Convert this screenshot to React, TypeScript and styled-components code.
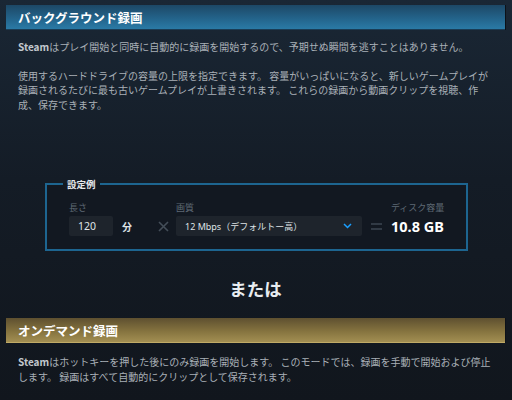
import styled, { createGlobalStyle } from 'styled-components'

const GlobalStyle = createGlobalStyle`
  html, body {
    margin: 0;
    padding: 0;
    background: #141b24;
  }
  body {
    font-family: "Noto Sans CJK JP", "Noto Sans", sans-serif;
  }
`

const Page = styled.div`
  width: 512px;
  height: 400px;
  box-sizing: border-box;
  padding: 5px 7px 0 6px;
  background: linear-gradient(180deg, #1a2735 0%, #141c26 45%, #11161d 100%);
  overflow: hidden;
`

const SectionHeader = styled.div<{ $tone: 'blue' | 'gold' }>`
  height: 24px;
  display: flex;
  align-items: center;
  padding: 0 12px;
  color: #ffffff;
  font-size: 12.5px;
  font-weight: 700;
  background: ${p =>
    p.$tone === 'blue'
      ? 'linear-gradient(180deg, #1d4866 0%, #23638a 55%, #2a7aa6 100%)'
      : 'linear-gradient(180deg, #5e5030 0%, #85733f 55%, #a28e52 100%)'};
  border-bottom: 1px solid ${p => (p.$tone === 'blue' ? '#1a3c55' : '#c0aa66')};
  box-shadow: 1px 0 0 #0c1118;
`

const Text = styled.p<{ $top: number }>`
  margin: ${p => p.$top}px 0 0;
  padding: 0 12px;
  color: #a9b0b7;
  font-size: 10px;
  line-height: 14.5px;
  white-space: nowrap;

  b {
    color: #c2c8cd;
    font-weight: 700;
  }
`

const Spacer = styled.div<{ $h: number }>`
  height: ${p => p.$h}px;
`

const Example = styled.fieldset`
  margin: 0 40px 0 39px;
  padding: 0 22px 0 22px;
  height: 73px;
  box-sizing: border-box;
  border: 2px solid #1d6590;
  background: #121821;
  display: flex;
  align-items: flex-start;
`

const Legend = styled.legend`
  margin-left: -6px;
  padding: 0 4px;
  color: #e6e9ec;
  font-size: 9.5px;
  font-weight: 700;
  line-height: 12px;
`

const Row = styled.div`
  display: flex;
  align-items: flex-end;
  margin-top: 12px;
`

const Field = styled.div`
  display: flex;
  flex-direction: column;
  gap: 2px;
  white-space: nowrap;
`

const Label = styled.span`
  color: #5f6a75;
  font-size: 9px;
  line-height: 12px;
`

const Input = styled.div<{ $width: number }>`
  width: ${p => p.$width}px;
  height: 20px;
  box-sizing: border-box;
  background: #1e242c;
  border-radius: 2px;
  display: flex;
  align-items: center;
  padding: 0 10px 0 9px;
  color: #dfe3e6;
  font-size: 10.5px;
  font-family: "Noto Sans", "Noto Sans CJK JP", sans-serif;
`

const Unit = styled.span`
  height: 20px;
  display: flex;
  align-items: center;
  color: #dfe3e6;
  font-size: 10px;
  font-weight: 700;
  margin-left: 9px;
  width: 36px;
`

const Operator = styled.span<{ $width: number; $center?: boolean }>`
  width: ${p => p.$width}px;
  height: 20px;
  display: flex;
  align-items: center;
  justify-content: ${p => (p.$center ? 'center' : 'flex-start')};
`

const SelectText = styled.span`
  flex: 1;
  font-size: 9px;
  white-space: nowrap;
`

const Result = styled.span`
  height: 20px;
  display: flex;
  align-items: center;
  color: #ffffff;
  font-family: "Noto Sans", sans-serif;
  font-size: 14.5px;
  font-weight: 700;
`

const Or = styled.div`
  text-align: center;
  color: #e8ecf0;
  font-size: 17.5px;
  font-weight: 700;
  margin: 26px 0 17px;
  line-height: 24px;
`

const CloseIcon = () => (
  <svg width="11" height="11" viewBox="0 0 11 11">
    <path d="M1 1 L10 10 M10 1 L1 10" stroke="#444e59" strokeWidth="1.6" />
  </svg>
)

const EqualsIcon = () => (
  <svg width="11" height="9" viewBox="0 0 11 9">
    <path d="M0 2 H11 M0 7 H11" stroke="#3c4651" strokeWidth="1.6" />
  </svg>
)

const Chevron = () => (
  <svg width="9" height="6" viewBox="0 0 9 6">
    <path d="M1 1 L4.5 4.5 L8 1" stroke="#1a9fff" strokeWidth="1.5" fill="none" />
  </svg>
)

export default function App() {
  return (
    <>
      <GlobalStyle />
      <Page>
        <SectionHeader $tone="blue">バックグラウンド録画</SectionHeader>
        <Text $top={10}>
          <b>Steam</b>はプレイ開始と同時に自動的に録画を開始するので、予期せぬ瞬間を逃すことはありません。
        </Text>
        <Text $top={14}>
          使用するハードドライブの容量の上限を指定できます。 容量がいっぱいになると、新しいゲームプレイが
          <br />
          録画されるたびに最も古いゲームプレイが上書きされます。 これらの録画から動画クリップを視聴、作
          <br />
          成、保存できます。
        </Text>
        <Spacer $h={66} />
        <Example>
          <Legend>設定例</Legend>
          <Row>
            <Field>
              <Label>長さ</Label>
              <Input $width={44}>120</Input>
            </Field>
            <Unit>分</Unit>
            <Operator $width={18}>
              <CloseIcon />
            </Operator>
            <Field>
              <Label>画質</Label>
              <Input $width={186}>
                <SelectText>12 Mbps（デフォルトー高）</SelectText>
                <Chevron />
              </Input>
            </Field>
            <Operator $width={29} $center>
              <EqualsIcon />
            </Operator>
            <Field>
              <Label>ディスク容量</Label>
              <Result>10.8 GB</Result>
            </Field>
          </Row>
        </Example>
        <Or>または</Or>
        <SectionHeader $tone="gold">オンデマンド録画</SectionHeader>
        <Text $top={12}>
          <b>Steam</b>はホットキーを押した後にのみ録画を開始します。 このモードでは、録画を手動で開始および停止
          <br />
          します。 録画はすべて自動的にクリップとして保存されます。
        </Text>
      </Page>
    </>
  )
}
